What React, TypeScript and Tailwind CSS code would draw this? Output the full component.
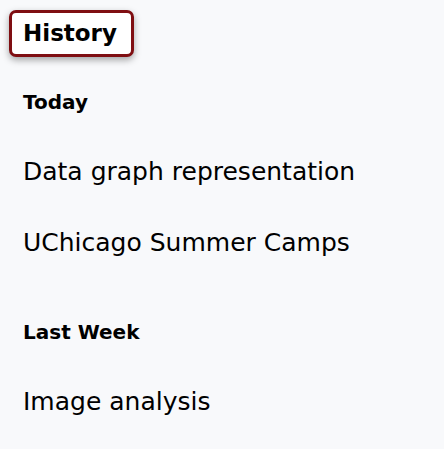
export default function App() {
  return (
    <div className="min-h-[449px] w-[444px] bg-[#f8f9fb] text-black" style={{ fontFamily: '"DejaVu Sans", sans-serif' }}>
      <div className="px-[9px] pt-[10px]">
        <div className="inline-flex h-[47px] w-[125px] items-center rounded-[7px] border-[3px] border-[#7f0e12] bg-white pl-[11px] text-[23px] font-bold shadow-[0_3px_7px_rgba(0,0,0,0.35)]">
          History
        </div>
      </div>
      <div className="px-[23px]">
        <div className="mt-[34px] text-[20px] font-bold leading-[22px]">Today</div>
        <div className="mt-[44px] text-[25px] leading-[30px]">Data graph representation</div>
        <div className="mt-[41px] text-[25px] leading-[30px]">UChicago Summer Camps</div>
        <div className="mt-[63px] text-[20px] font-bold leading-[22px]">Last Week</div>
        <div className="mt-[44px] text-[25px] leading-[30px]">Image analysis</div>
      </div>
    </div>
  );
}
